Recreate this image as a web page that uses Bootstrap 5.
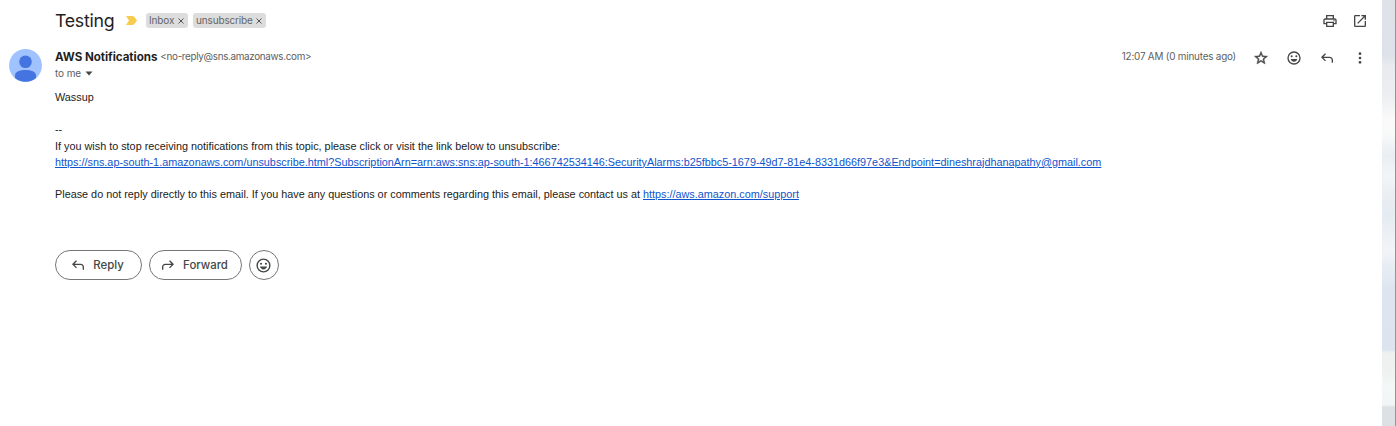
<!DOCTYPE html>
<html lang="en">
<head>
<meta charset="utf-8">
<meta name="viewport" content="width=device-width, initial-scale=1">
<title>Testing</title>
<link href="https://cdn.jsdelivr.net/npm/bootstrap@5.3.0/dist/css/bootstrap.min.css" rel="stylesheet">
<style>
body{font-family:"Inter","Liberation Sans",sans-serif;color:#1f1f1f;height:426px;overflow:hidden;background:#fff}
svg{display:block;fill:#444746;flex:none}
.subject-row{height:41px;padding-left:55px}
.subject-title{font-size:17.8px;line-height:24px;font-weight:400;letter-spacing:-.3px;width:71px}
.importance{fill:#f7cb4d}
.tag-list{gap:5px;margin-left:9px}
.tag{background:#ddd;color:#666;font-size:10px;line-height:15px;height:15px;border-radius:3px;padding:0 4px 0 3px;letter-spacing:-.15px}
.tag-inbox{width:42px}
.tag-unsub{width:73px}
.tools{width:60px;gap:14px}
.mail-head{height:44px;padding-left:9px}
.avatar{margin-top:8px;margin-right:13px}
.sender{font-size:11.6px;font-weight:650;line-height:16px;letter-spacing:-.05px}
.addr,.when{font-size:9.9px;color:#5e5e5e;line-height:15px}
.addr{letter-spacing:-.33px;margin-left:3px}
.when{letter-spacing:-.2px}
.head-icons{gap:17px;padding:1px 14px 0 17px}
.to{font-size:10px;line-height:17px;color:#5e5e5e;letter-spacing:-.1px}
.mail-body{font:10.84px/16.2px "Liberation Sans",sans-serif;color:#222;padding:4px 0 0 55px;height:165px;white-space:nowrap}
.mail-body a{color:#1155cc}
.actions{padding-left:55px;gap:7px}
.pill{height:30px;border:1px solid #747775;border-radius:15px;color:#444746;background:#fff;font-size:11.4px;line-height:16px;font-weight:500;padding:0 3px 0 0;gap:7px}
.pill-reply{width:87px}
.pill-forward{width:93px}
.pill-react{width:30px;padding:0 1px 0 0}
.backdrop-strip{width:14px;border-right:1px solid #8496b5;background:linear-gradient(#dfe2e9 0,#dde1e9 55px,#e8eaef 65px,#eceef1 95px,#fafafa 120px,#f7f8f9 135px,#e9eef3 155px,#f2f5f7 175px,#e8edf2 200px,#e5ebf2 215px,#f2f4f7 250px,#e8edf3 266px,#dce5f0 290px,#dce5ef 350px,#eff1f1 353px,#eef1f0 372px,#f3f7f7 385px,#f1f5f5 405px,#dce1e6 407px,#dce1e6 426px)}
</style>
</head>
<body class="d-flex">
<svg width="0" height="0" class="position-absolute">
<defs>
<symbol id="smile" viewBox="0 0 24 24"><path d="M12 2a10 10 0 1 0 0 20 10 10 0 0 0 0-20zm0 18a8 8 0 1 1 0-16 8 8 0 0 1 0 16zM8.500 11a1.500 1.500 0 1 0 0-3 1.500 1.500 0 0 0 0 3zm7 0a1.500 1.500 0 1 0 0-3 1.500 1.500 0 0 0 0 3zM7 13.500h10c-.6 2.500-2.600 4-5 4s-4.400-1.500-5-4z"/></symbol>
<symbol id="back" viewBox="0 0 24 24"><path d="M19 19v-4c0-1.700-1.300-3-3-3H6.800l3.600 3.600L9 17l-6-6 6-6 1.400 1.400L6.800 10H16c2.800 0 5 2.200 5 5v4h-2z"/></symbol>
</defs>
</svg>
<main class="flex-grow-1">
  <header class="subject-row d-flex align-items-center">
    <h1 class="subject-title mb-0">Testing</h1>
    <svg class="importance" width="11" height="9" viewBox="0 0 11 9"><path d="M0 0h6.500q1 0 1.600.8L11 4.500 8.100 8.200q-.6.800-1.600.8H0l3-4.500z"/></svg>
    <div class="tag-list d-flex">
      <span class="tag tag-inbox d-flex align-items-center justify-content-between">Inbox <svg width="6" height="6" viewBox="0 0 6 6"><path d="M.5.500l5 5m0-5l-5 5" stroke="#555"/></svg></span>
      <span class="tag tag-unsub d-flex align-items-center justify-content-between">unsubscribe <svg width="6" height="6" viewBox="0 0 6 6"><path d="M.5.500l5 5m0-5l-5 5" stroke="#555"/></svg></span>
    </div>
    <div class="tools d-flex ms-auto">
      <svg width="16" height="16" viewBox="0 0 24 24"><path d="M19 8h-1V3H6v5H5c-1.660 0-3 1.340-3 3v6h4v4h12v-4h4v-6c0-1.660-1.340-3-3-3zM8 5h8v3H8V5zm8 14H8v-4h8v4zm2-4v-2H6v2H4v-4c0-.55.45-1 1-1h14c.55 0 1 .45 1 1v4h-2z"/><circle cx="18" cy="11.500" r="1"/></svg>
      <svg width="16" height="16" viewBox="0 0 24 24"><path d="M19 19H5V5h7V3H5a2 2 0 0 0-2 2v14a2 2 0 0 0 2 2h14a2 2 0 0 0 2-2v-7h-2v7zM14 3v2h3.590l-9.830 9.830 1.410 1.410L19 6.410V10h2V3h-7z"/></svg>
    </div>
  </header>
  <section class="mail-head d-flex">
    <svg class="avatar" width="33" height="33" viewBox="0 0 33 33"><circle cx="16.500" cy="16.500" r="16.500" fill="#a0c3ff"/><circle cx="16.500" cy="12.700" r="6.300" fill="#4374e0"/><path d="M6 29v-2.500c0-4 5-5.500 10.500-5.500S27 22.500 27 26.500V29a16.400 16.400 0 0 1-21 0z" fill="#4374e0"/></svg>
    <div class="pt-2">
      <div class="d-flex"><span class="sender">AWS Notifications</span><span class="addr">&lt;no-reply@sns.amazonaws.com&gt;</span></div>
      <div class="to d-flex align-items-center">to me <svg class="ms-1" width="8" height="5" viewBox="0 0 8 5"><path d="M.5.500h7L4 4.500z"/></svg></div>
    </div>
    <div class="d-flex ms-auto align-items-start pt-2">
      <span class="when">12:07 AM (0 minutes ago)</span>
      <div class="head-icons d-flex">
        <svg width="16" height="16" viewBox="0 0 24 24"><path stroke="#444746" stroke-width=".6" d="M22 9.240l-7.190-.62L12 2 9.190 8.630 2 9.240l5.460 4.730L5.820 21 12 17.270 18.180 21l-1.630-7.030L22 9.240zM12 15.400l-3.760 2.270 1-4.280-3.320-2.880 4.380-.38L12 6.100l1.710 4.040 4.380.38-3.320 2.880 1 4.280L12 15.400z"/></svg>
        <svg width="16" height="16"><use href="#smile"/></svg>
        <svg width="16" height="16"><use href="#back"/></svg>
        <svg width="16" height="16" viewBox="0 0 24 24"><circle cx="12" cy="5.500" r="2"/><circle cx="12" cy="12" r="2"/><circle cx="12" cy="18.500" r="2"/></svg>
      </div>
    </div>
  </section>
  <article class="mail-body">
    <div>Wassup</div><br>
    <div>--</div>
    <div>If you wish to stop receiving notifications from this topic, please click or visit the link below to unsubscribe:</div>
    <div><a href="#">https://sns.ap-south-1.amazonaws.com/unsubscribe.html?SubscriptionArn=arn:aws:sns:ap-south-1:466742534146:SecurityAlarms:b25fbbc5-1679-49d7-81e4-8331d66f97e3&amp;Endpoint=dineshrajdhanapathy@gmail.com</a></div><br>
    <div>Please do not reply directly to this email. If you have any questions or comments regarding this email, please contact us at <a href="#">https://aws.amazon.com/support</a></div>
  </article>
  <div class="actions d-flex">
    <button class="pill pill-reply d-flex align-items-center justify-content-center"><svg width="16" height="16"><use href="#back"/></svg>Reply</button>
    <button class="pill pill-forward d-flex align-items-center justify-content-center"><svg width="16" height="16"><use href="#back" transform="matrix(-1 0 0 1 16 0)"/></svg>Forward</button>
    <button class="pill pill-react d-flex align-items-center justify-content-center"><svg width="17" height="17"><use href="#smile"/></svg></button>
  </div>
</main>
<aside class="backdrop-strip flex-shrink-0"></aside>
<script src="https://cdn.jsdelivr.net/npm/bootstrap@5.3.0/dist/js/bootstrap.bundle.min.js"></script>
</body>
</html>
